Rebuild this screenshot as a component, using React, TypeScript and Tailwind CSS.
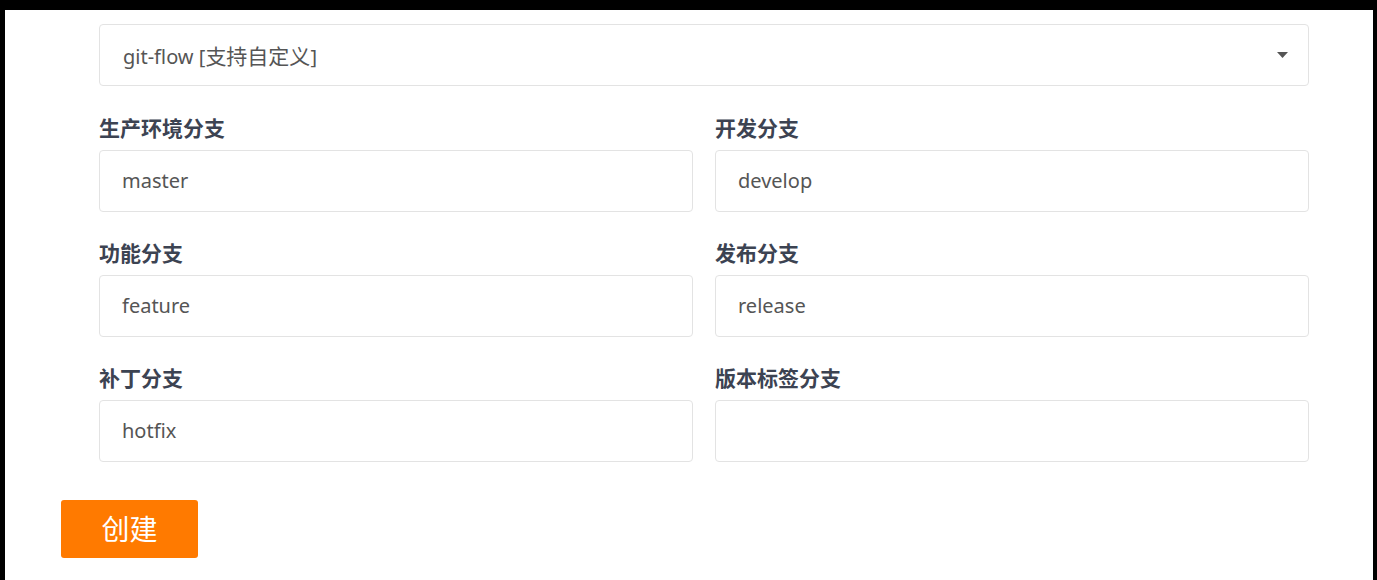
import React from "react";

const font = { fontFamily: '"Noto Sans", "Noto Sans CJK SC", sans-serif' };

function Field({ label, value }: { label: string; value: string }) {
  return (
    <div className="flex flex-col">
      <div className="h-[30px] mb-[7px] flex items-center text-[21px] font-bold text-[#3c4352] leading-none">
        {label}
      </div>
      <div className="h-[62px] rounded-[4px] border border-[#e3e3e3] bg-white flex items-center px-[22px] text-[20px] text-[#555]">
        {value}
      </div>
    </div>
  );
}

export default function App() {
  return (
    <div
      className="w-[1377px] h-[580px] bg-black pt-[10px] pl-[5px] pr-[4px] overflow-hidden"
      style={font}
    >
      <div className="bg-white h-full pt-[14px]">
        <div className="ml-[94px] w-[1210px]">
          <div className="h-[62px] rounded-[4px] border border-[#e3e3e3] bg-white flex items-center justify-between pl-[23px] pr-[20px] text-[20px] text-[#555]">
            <span className="pt-[3px]">
              git-flow [<span className="text-[21px]">支持自定义</span>]
            </span>
            <svg width="11" height="6" viewBox="0 0 11 6">
              <path d="M0 0 L11 0 L5.5 6 Z" fill="#555" />
            </svg>
          </div>
          <div className="mt-[27px] grid grid-cols-2 gap-x-[22px] gap-y-[26px]">
            <Field label="生产环境分支" value="master" />
            <Field label="开发分支" value="develop" />
            <Field label="功能分支" value="feature" />
            <Field label="发布分支" value="release" />
            <Field label="补丁分支" value="hotfix" />
            <Field label="版本标签分支" value="" />
          </div>
        </div>
        <div className="ml-[56px] mt-[38px]">
          <button className="w-[137px] h-[58px] rounded-[3px] bg-[#ff7a00] text-white text-[28px] flex items-center justify-center">
            创建
          </button>
        </div>
      </div>
    </div>
  );
}
